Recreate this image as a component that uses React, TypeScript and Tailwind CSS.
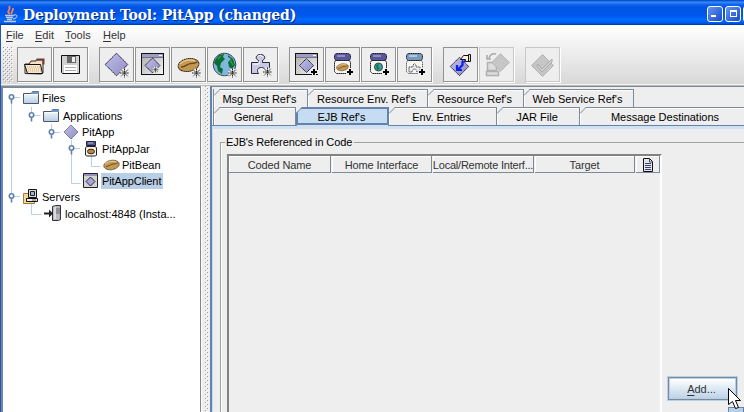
import React from "react";

type Kids = { children?: React.ReactNode };

const Spark = ({ x = 25, y = 26 }: { x?: number; y?: number }) => (
  <g stroke="#222" strokeWidth="1" strokeDasharray="1.6 .5">
    <circle cx={x} cy={y} r="4.5" fill="#eee" stroke="none" />
    <path d={`M${x} ${y - 4.5}v9M${x - 4.5} ${y}h9M${x - 3.3} ${y - 3.3}l6.6 6.6M${x + 3.3} ${y - 3.3}l-6.6 6.6`} fill="none" />
  </g>
);

const Plus = ({ x = 25, y = 25 }: { x?: number; y?: number }) => (
  <g fill="none">
    <path d={`M${x} ${y - 4}v8M${x - 4} ${y}h8`} stroke="#eee" strokeWidth="4" />
    <path d={`M${x} ${y - 3}v6M${x - 3} ${y}h6`} stroke="#000" strokeWidth="2" />
  </g>
);

const Diamond = ({ x, y, r, off = false }: { x: number; y: number; r: number; off?: boolean }) => (
  <path
    d={`M${x} ${y - r}L${x + r} ${y}L${x} ${y + r}L${x - r} ${y}Z`}
    fill={off ? "#c6c6c6" : "url(#violet)"}
    stroke={off ? "#b4b4b4" : "#25233f"}
    strokeDasharray={off ? undefined : "1.5 .3"}
  />
);

const Win = () => (
  <>
    <rect x="6.5" y="6.5" width="22" height="21" fill="url(#silver)" stroke="#111" />
    <path d="M7 8.5h21" stroke="#a09cc8" strokeWidth="3" />
    <path d="M7 10.5h21" stroke="#777" />
    <path d="M24 8.5h3" stroke="#fff" />
  </>
);

const Bean = () => (
  <>
    <ellipse cx="17.5" cy="18" rx="10.5" ry="6.3" transform="rotate(-10 17.5 18)" fill="#c39850" stroke="#302313" strokeDasharray="1.5 .4" />
    <path d="M9 17c3-4 10-5 15-3" stroke="#e6c488" strokeWidth="1.6" fill="none" />
    <path d="M10 20c4 0 5-2 8-3s6 0 8-2" stroke="#65451d" strokeWidth="1.3" fill="none" />
  </>
);

const Jar = ({ light = false, children }: Kids & { light?: boolean }) => (
  <>
    <path d="M10.5 13.5h14l1 2v9l-2 2H11.500l-2-2v-9z" fill="#f8f5ef" stroke="#222" strokeDasharray={light ? "1 1" : "1.7 .3"} />
    <rect x="9.5" y="6.5" width="16" height="7" rx="2.5" fill={light ? "#7799b7" : "#58579a"} stroke="#202035" strokeDasharray="1.5 .3" />
    <path d="M12 9h8" stroke={light ? "#c1d8e8" : "#a3a2ce"} strokeWidth="1.5" />
    {children}
  </>
);

function Tool({ children, off = false, gap = "" }: Kids & { off?: boolean; gap?: string }) {
  return (
    <button className={`h-[35px] w-[35px] shrink-0 border bg-[#eee] shadow-[1px_1px_0_#fff] ${off ? "border-[#c8c8c8]" : "border-[#929292]"} ${gap}`}>
      <svg viewBox="1 1 33 33" className="block h-[33px] w-[33px]">{children}</svg>
    </button>
  );
}

function Toolbar() {
  return (
    <div className="flex h-[37px] items-start pl-[2px]">
      <svg className="mr-[4px] h-[36px] w-[10px] shrink-0"><rect width="10" height="36" fill="url(#dots)" /></svg>
      <div className="flex gap-px">
        <Tool>
          <path d="M8 26.5V17h4l2-3h5v-1h7v13l-2 1z" fill="#f4dfc5" stroke="#382c26" />
          <path d="M19.5 12.5h7v5" stroke="#713c3e" strokeWidth="2" fill="none" />
          <path d="M7.5 17.5h16l2 9h-15z" fill="#f6e6cf" stroke="#15110e" />
          <path d="M10 20h13M11 22h13M11 24h13" stroke="#cfac88" strokeDasharray="1 1" />
        </Tool>
        <Tool>
          <path d="M8.5 8.5h18v18h-17l-1-1z" fill="#d0d0d0" stroke="#111" />
          <path d="M14 9h9v7h-9z" fill="#666" /><path d="M19 10h3v5h-3z" fill="#eee" />
          <path d="M11 18h13v8H11z" fill="#fff" /><path d="M12 20.5h11M12 23.5h11" stroke="#aaa" />
        </Tool>
        <Tool gap="ml-[10px]"><Diamond x={17.5} y={17.5} r={11.3} /><Spark x={25.5} /></Tool>
        <Tool><Win /><Diamond x={17.5} y={18.5} r={7.5} /><g transform="translate(4 4) scale(.72)"><Spark x={23} y={26} /></g></Tool>
        <Tool><Bean /><Spark x={25.5} /></Tool>
        <Tool>
          <circle cx="17.5" cy="17.5" r="11.2" fill="#82b6df" stroke="#172126" strokeDasharray="1.5 .3" />
          <path d="M8 13l4-5 5-1-1 3 2 2-4 4-1 4 3 2-1 5-4-3-1-5-3-3zM21 8l5 4 2 6-3 4-3-2-1-5 3-3-3-2z" fill="#0c6e33" />
          <path d="M11 12l3-3M23 13l3 5" stroke="#2b994c" strokeWidth="1.5" /><Spark x={25.5} />
        </Tool>
        <Tool>
          <path d="M8.5 15.5h7v-2c-4-2-2.500-6 2-6s6 4 2 6v2h7v11h-5c2-4 0-6-3-6-4 0-5 3-3 6h-7z" fill="#cac7e5" stroke="#292837" /><path d="M15 9q3-2 5 1M10 17h6v-3" stroke="#fff" fill="none" /><Spark x={24.5} y={25} />
        </Tool>
        <Tool gap="ml-[10px]"><Win /><Diamond x={17.5} y={18.5} r={7} /><Plus /></Tool>
        <Tool><Jar><g transform="translate(7.5 10.5) scale(.57 .54)"><Bean /></g></Jar><Plus /></Tool>
        <Tool><Jar><circle cx="17.5" cy="20" r="4" fill="#3e9cac" stroke="#225543" /><path d="M15 18l3-1-1 3 2 2-3 1z" fill="#17713e" /></Jar><Plus /></Tool>
        <Tool><Jar light><path d="M12 20h4v-2l1.500-1.500L19 18v2h4v5h-3c0-4-5-4-5 0h-3z" fill="#eee" stroke="#4c5265" strokeDasharray="1.5 .5" /></Jar><Plus /></Tool>
        <Tool gap="ml-[10px]">
          <Diamond x={16.5} y={19.5} r={9.2} />
          <path d="M17.5 12.500l3-4h6v6h-4v-2z" fill="#fff1dd" stroke="#111" />
          <path d="M25.500 7.500h2v7h-2z" fill="#eadbc8" stroke="#111" />
          <path d="M22.5 14l-3 1v3l-5 5M14 18v5h5" stroke="#0920e8" strokeWidth="2.2" fill="none" />
        </Tool>
        <Tool off>
          <path d="M8.5 15.5h9v8h-9zM7.5 24.5h12v4h-12z" fill="#ddd" stroke="#b0b0b0" strokeWidth="1.5" />
          <Diamond x={21.5} y={15.5} r={8.8} off /><path d="M17 7c-4-1-6 1-7 4M8 8v4h4" stroke="#aaa" strokeWidth="1.7" fill="none" />
        </Tool>
        <Tool off gap="ml-[10px]">
          <Diamond x={17.5} y={18.5} r={11} off /><path d="M13 17l4 5 10-10v3L17 25l-5-6z" fill="#d1d1d1" stroke="#aaa" />
        </Tool>
      </div>
    </div>
  );
}

const FolderIcon = () => (
  <svg className="h-[14px] w-[17px]" viewBox="0 0 17 14">
    <path d="M.5 2.5h8l1-2h6v12H.5z" fill="url(#folder)" stroke="#4d5665" /><path d="M9 .5h7v2.500H9z" fill="#7397c4" /><path d="M2 3.5h13" stroke="#fff" />
  </svg>
);
const MiniDiamond = () => <svg className="h-[16px] w-[16px]" viewBox="5 5 25 25"><Diamond x={17.5} y={17.5} r={11} /></svg>;
const MiniJar = () => (
  <svg className="h-[16px] w-[15px]" viewBox="0 0 15 16">
    <path d="M2.500 5.500h9l1 1.500v7l-1 1h-9l-1-1V7z" fill="#f4efe7" stroke="#222" />
    <path d="M2.500.5h9v4h-9z" fill="#58579a" stroke="#222238" /><path d="M4 2h5" stroke="#b4b3d8" />
    <ellipse cx="7" cy="10.500" rx="3.500" ry="2.300" fill="#bb8945" stroke="#38260f" />
  </svg>
);
const MiniBean = () => <svg className="h-[14px] w-[17px]" viewBox="6 9 23 18"><Bean /></svg>;
const ClientIcon = () => (
  <svg className="h-[16px] w-[16px]" viewBox="0 0 16 16"><path d="M.5.5h14v14H.5z" fill="#d4d4d4" stroke="#222" /><path d="M1 2h13" stroke="#9590be" strokeWidth="2" /><path d="M7.500 4L12 8.500 7.500 13 3 8.500z" fill="#aaa6d7" stroke="#292742" /></svg>
);
const ServersIcon = () => (
  <svg className="h-[16px] w-[16px]" viewBox="0 0 16 16"><path d="M.5 4.500h5l2 2h4v8H.5z" fill="#f4d59a" stroke="#a47a43" /><path d="M5.500.5h8v8h-8z" fill="#ddd" stroke="#111" /><path d="M7.500 2.500h4v4h-4z" fill="#9eafd2" stroke="#222" /><path d="M3.500 9.500h11v3h-11z" fill="#eee" stroke="#111" /><path d="M9 11h4" stroke="#666" /></svg>
);
const HostIcon = () => (
  <svg className="h-[17px] w-[18px]" viewBox="0 0 18 17"><path d="M8.500 1.500l3-1h5v14l-2 1h-6z" fill="#b9b9c4" stroke="#333" /><path d="M11 2v12" stroke="#fff" /><path d="M12 4h4M12 6h4M12 8h4" stroke="#666" /><path d="M0 8.500h6" stroke="#222" strokeWidth="2" /><path d="M5 4.500l4 4-4 4z" fill="#222" /></svg>
);

function TreeRow({ icon, label, size, pad, gap = "gap-[3px]", chosen = false }: { icon: React.ReactNode; label: string; size: string; pad: string; gap?: string; chosen?: boolean }) {
  return (
    <div className={`relative flex items-center ${size} ${pad} ${gap}`}>
      <span className="shrink-0">{icon}</span>
      <span className={`whitespace-nowrap leading-[16px] ${chosen ? "-ml-px w-[62px] bg-[#b8cfe5] pl-px tracking-[-0.1px]" : ""}`}>{label}</span>
    </div>
  );
}

function Tree() {
  const knots = [[8, 9], [28, 27], [48, 44], [68, 60], [8, 108]];
  return (
    <aside className="relative h-full w-[198px] shrink-0 border-r border-t-2 border-r-[#858585] border-t-[#7a8a99] bg-white pt-px">
      <svg className="absolute left-0 top-0 h-[150px] w-[100px]">
        <path d="M8.500 9.500v99M8 9.500h9M28.500 19v8.500h9M48.500 36v8.500h9M68.500 52v43.500h9M68 60.500h9M88.500 68v10.500h9M8 108.500h9M28.500 115v11.500h10" fill="none" stroke="#b8cfe5" />
        {knots.map(([x, y], i) => <g key={i} stroke="#5f80ad" strokeWidth="1.6"><circle cx={x + .5} cy={y} r="2.2" fill="#fff" /><path d={`M${x + .5} ${y + 2.5}v4`} /></g>)}
      </svg>
      <TreeRow icon={<FolderIcon />} label="Files" size="h-[18px]" pad="pl-[20px]" gap="gap-[2px]" />
      <TreeRow icon={<FolderIcon />} label="Applications" size="h-[17px]" pad="pl-[40px]" />
      <TreeRow icon={<MiniDiamond />} label="PitApp" size="h-[16px]" pad="pl-[60px]" />
      <TreeRow icon={<MiniJar />} label="PitAppJar" size="h-[17px]" pad="pl-[81px]" />
      <TreeRow icon={<MiniBean />} label="PitBean" size="h-[16px]" pad="pl-[100px]" gap="gap-[2px]" />
      <TreeRow icon={<ClientIcon />} label="PitAppClient" size="h-[16px]" pad="pl-[80px]" chosen />
      <TreeRow icon={<ServersIcon />} label="Servers" size="h-[16px]" pad="pl-[20px]" />
      <TreeRow icon={<HostIcon />} label="localhost:4848 (Insta..." size="h-[17px]" pad="pl-[41px]" />
    </aside>
  );
}

function Tab({ label, width, on = false }: { label: string; width: string; on?: boolean }) {
  return (
    <div className={`relative flex h-[18px] shrink-0 items-center justify-center whitespace-nowrap pr-[2px] pt-px ${width} ${on ? "border-2 border-[#6382ae] bg-[#c5dcf2]" : "border-r border-t border-[#7a8a99] bg-[#eee] shadow-[inset_1px_1px_0_#fff]"}`}>
      <svg className={`absolute h-[7px] w-[7px] ${on ? "-left-[2px] -top-[2px]" : "left-0 -top-px"}`}><path d="M0 0h6L0 6z" fill="#eee" /><path d="M0 6.500L6.500 0" stroke="#7a8a99" /></svg>
      {on && <span className="absolute -bottom-[3px] -left-px -right-px h-px bg-[#d0e1f1]" />}
      {label}
    </div>
  );
}

const HeadCell = ({ w, children }: Kids & { w: string }) => (
  <div className={`flex h-[17px] shrink-0 items-center justify-center whitespace-nowrap border-b border-r border-[#7a8a99] pt-px tracking-[-0.12px] text-[#333] shadow-[inset_1px_1px_0_#fff] ${w}`}>{children}</div>
);

function Editor() {
  return (
    <main className="flex min-w-0 flex-1 flex-col overflow-hidden border-l-2 border-t border-l-[#6382ae] border-t-[#7a8a99] pt-[2px]">
      <div className="flex pl-px">
        <Tab label="Msg Dest Ref's" width="w-[95px] border-l" />
        <Tab label="Resource Env. Ref's" width="w-[120px]" />
        <Tab label="Resource Ref's" width="w-[96px]" />
        <Tab label="Web Service Ref's" width="w-[110px]" />
      </div>
      <div className="relative flex pl-px">
        <Tab label="General" width="w-[83px] border-l" />
        <Tab label="EJB Ref's" width="w-[93px]" on />
        <Tab label="Env. Entries" width="w-[108px]" />
        <Tab label="JAR File" width="w-[83px]" />
        <Tab label="Message Destinations" width="w-[173px]" />
      </div>
      <div className="h-px shrink-0 bg-[#6382ae]" />
      <div className="h-[3px] shrink-0 bg-[#d0e1f1]" />
      <div className="flex flex-1 border-l border-[#c8ddf2] pl-[7px] pt-[13px]">
        <fieldset className="-mt-[7px] min-w-0 flex-1 border-l border-t border-[#a0a0a0] pl-[6px] shadow-[inset_1px_0_0_#fff]">
          <legend className="-ml-[2px] h-[14px] pl-px pr-[2px] leading-[14px] tracking-[-0.1px]">EJB's Referenced in Code</legend>
          <div className="flex h-full pt-[5px]">
            <div className="w-[435px] shrink-0 border-l-2 border-r-2 border-t-2 border-l-[#828282] border-r-white border-t-[#828282]">
              <div className="flex gap-px">
                <HeadCell w="w-[102px]">Coded Name</HeadCell>
                <HeadCell w="w-[100px]">Home Interface</HeadCell>
                <HeadCell w="w-[101px]"><span className="tracking-[-0.22px]">Local/Remote Interf...</span></HeadCell>
                <HeadCell w="w-[100px]">Target</HeadCell>
                <HeadCell w="w-[24px]">
                  <svg className="h-[14px] w-[12px]"><path d="M1.500.5h6l3 3v10h-9z" fill="#e1e1f0" stroke="#111" /><path d="M7.500 1v3h3M3 5.500h6M3 7.500h6M3 9.500h6M3 11.500h6" stroke="#444468" fill="none" /></svg>
                </HeadCell>
              </div>
            </div>
            <div className="relative pl-[5px] pt-[222px]">
              <button className="flex h-[25px] w-[71px] items-center justify-center border border-[#b8cfe5] bg-[#7a8a99] p-px">
                <span className="flex h-full w-full items-center justify-center border border-[#b8cfe5] bg-linear-to-b from-white to-[#bdd3e8] pr-[2px] text-[#333]"><span className="underline underline-offset-2">A</span>dd...</span>
              </button>
              <div className="absolute left-[66px] top-[253px] h-[6px] w-[16px] border border-[#6382ae] bg-[#b8cfe5]" />
              <svg className="absolute left-[66px] top-[234px] h-[24px] w-[14px]"><path d="M.5.5v16l4-3 3 7 3-1-3-7h5z" fill="#fff" stroke="#000" /></svg>
            </div>
          </div>
        </fieldset>
      </div>
    </main>
  );
}

const MenuItem = ({ first, rest, w }: { first: string; rest: string; w: string }) => <span className={w}><span className="underline underline-offset-2">{first}</span>{rest}</span>;

export default function App() {
  return (
    <div className="flex h-[412px] w-[744px] flex-col overflow-hidden bg-[#eee] font-['Liberation_Sans',Arial,sans-serif] text-[11px] leading-[14px] text-black">
      <svg className="absolute h-0 w-0"><defs>
        <linearGradient id="violet" x1="0" y1="0" x2="1" y2="1"><stop stopColor="#c2c0ea" /><stop offset="1" stopColor="#8f8bc2" /></linearGradient>
        <linearGradient id="silver" x1="0" y1="0" x2="1" y2="1"><stop stopColor="#aaa" /><stop offset="1" stopColor="#f7f7f7" /></linearGradient>
        <linearGradient id="folder" x1="0" y1="0" x2="0" y2="1"><stop stopColor="#fff" /><stop offset="1" stopColor="#b5cde5" /></linearGradient>
        <pattern id="dots" width="4" height="4" patternUnits="userSpaceOnUse"><path d="M0 0h1v1H0zM2 2h1v1H2z" fill="#999" /><path d="M1 1h1v1H1zM3 3h1v1H3z" fill="#fff" /></pattern>
      </defs></svg>
      <header className="flex h-[25px] shrink-0 items-center overflow-hidden border-b border-[#003fae] bg-[linear-gradient(#0b52cf_0px,#0b52cf_1px,#3b91ff_2px,#1769ef_4px,#0054e3_7px,#0057eb_15px,#006aff_20px,#005cf0_23px,#0046c0_24px)] pl-[4px]">
        <svg className="mt-[4px] h-[18px] w-[14px] shrink-0" viewBox="0 0 14 18" fill="none">
          <path d="M6 9C1 6 8 5 5 1M8 9c-2-2 2-3 1-6" stroke="#ef8464" strokeWidth="1.8" /><path d="M1 10.500h9M2 12.500h7M3 14.500h5M0 16.500h12" stroke="#c3c8df" strokeWidth="1.500" /><path d="M10 10c5-1 3 4-1 4" stroke="#d3d8e9" />
        </svg>
        <h1 className="ml-[5px] mt-[5px] w-[684px] shrink-0 whitespace-nowrap font-['DejaVu_Serif',serif] text-[14px] font-bold leading-[18px] tracking-[-0.18px] text-white [text-shadow:1px_1px_0_#052b86]">Deployment Tool: PitApp (changed)</h1>
        <div className="mt-[3px] flex shrink-0 gap-[2px]">
          <div className="flex h-[16px] w-[16px] items-end rounded-[3px] border border-white bg-linear-to-br from-[#6595f1] to-[#1649c8] pb-[4px] pl-[3px]"><span className="h-[2px] w-[5px] bg-white" /></div>
          <div className="flex h-[16px] w-[16px] items-center justify-center rounded-[3px] border border-white bg-linear-to-br from-[#6595f1] to-[#1649c8]"><span className="h-[7px] w-[7px] border border-t-2 border-white" /></div>
          <div className="h-[16px] w-[16px] rounded-[3px] border border-white bg-[#d44b32]" />
        </div>
      </header>
      <div className="flex min-h-0 flex-1 flex-col border-l border-[#2456ad]">
        <div className="h-[59px] shrink-0 bg-linear-to-b from-white to-[#d8d8d8]">
          <nav className="flex h-[22px] items-center pb-[2px] pl-[5px] text-[#333]"><MenuItem first="F" rest="ile" w="w-[29px]" /><MenuItem first="E" rest="dit" w="w-[30px]" /><MenuItem first="T" rest="ools" w="w-[38px]" /><MenuItem first="H" rest="elp" w="w-[30px]" /></nav>
          <Toolbar />
        </div>
        <div className="h-[2px] shrink-0 border-b border-[#bbb] bg-[#f4f4f4]" />
        <div className="flex min-h-0 flex-1 border-l-2 border-[#7186aa]">
          <Tree />
          <div className="flex w-[9px] shrink-0 justify-end border-l border-white pr-px"><svg className="h-full w-[4px]"><rect width="4" height="330" fill="url(#dots)" /></svg></div>
          <Editor />
        </div>
      </div>
    </div>
  );
}
